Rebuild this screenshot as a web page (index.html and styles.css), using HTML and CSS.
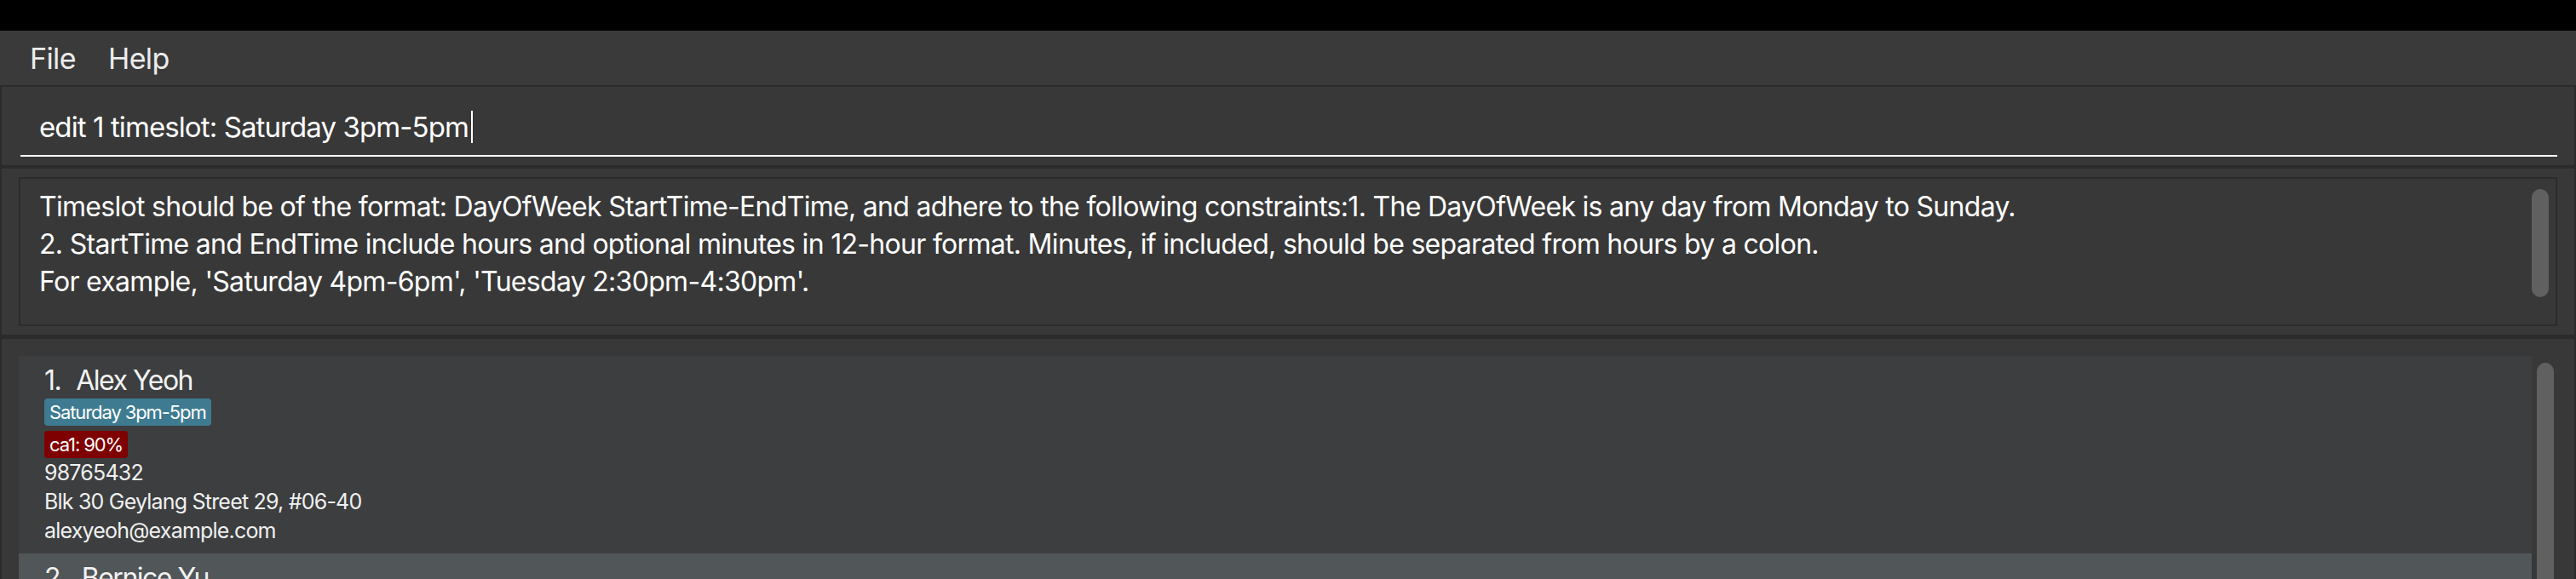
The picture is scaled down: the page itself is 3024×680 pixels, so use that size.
FILE: index.html
```html
<!DOCTYPE html>
<html lang="en">
<head>
<meta charset="utf-8">
<title>Address Book</title>
<link rel="stylesheet" href="styles.css">
</head>
<body>
<div class="titlebar"></div>
<nav class="menubar">
  <span class="menu-item">File</span>
  <span class="menu-item">Help</span>
</nav>
<main class="panels">
  <section class="command-panel">
    <div class="command-field">
      <span class="cmd-text">edit 1 timeslot: Saturday 3pm-5pm</span><span class="caret"></span>
    </div>
  </section>
  <section class="result-panel">
    <div class="result-box">
      <div class="result-text">
        <p>Timeslot should be of the format: DayOfWeek StartTime-EndTime, and adhere to the following constraints:1. The DayOfWeek is any day from Monday to Sunday.</p>
        <p>2. StartTime and EndTime include hours and optional minutes in 12-hour format. Minutes, if included, should be separated from hours by a colon.</p>
        <p>For example, 'Saturday 4pm-6pm', 'Tuesday 2:30pm-4:30pm'.</p>
      </div>
      <div class="scroll-track result-scroll"><div class="thumb"></div></div>
    </div>
  </section>
  <section class="list-panel">
    <div class="list">
      <article class="card even">
        <div class="name"><span class="index">1.</span>Alex Yeoh</div>
        <div class="tags"><span class="tag timeslot">Saturday 3pm-5pm</span></div>
        <div class="tags"><span class="tag grade">ca1: 90%</span></div>
        <div class="detail">98765432</div>
        <div class="detail">Blk 30 Geylang Street 29, #06-40</div>
        <div class="detail">alexyeoh@example.com</div>
      </article>
      <article class="card odd">
        <div class="name"><span class="index">2.</span>Bernice Yu</div>
      </article>
    </div>
    <div class="scroll-track list-scroll"><div class="thumb"></div></div>
  </section>
</main>
</body>
</html>
```
FILE: styles.css
```css
* { box-sizing: border-box; margin: 0; padding: 0; }
html, body { width: 3024px; height: 680px; overflow: hidden; background: #000; }
body { font-family: Inter, "Noto Sans", sans-serif; color: #fff; }

.titlebar { height: 36px; background: #000; }

.menubar {
  height: 64px;
  background: #3a3a3a;
  display: flex;
  align-items: center;
  padding-left: 35px;
  gap: 38px;
}
.menu-item { font-size: 34px; color: #ececec; letter-spacing: -0.6px; }

.panels {
  background: #2b2b2b;
  padding: 2px 2px 0 2px;
  display: flex;
  flex-direction: column;
  height: 580px;
  overflow: hidden;
}
.panels > section { flex-shrink: 0; }

.command-panel {
  height: 92px;
  background: #383838;
  padding: 0 20px 10px 22px;
  display: flex;
  flex-direction: column;
  justify-content: flex-end;
}
.command-field {
  border-bottom: 2px solid #fff;
  height: 80px;
  display: flex;
  align-items: center;
  padding-left: 22px;
  padding-top: 12px;
}
.cmd-text { font-size: 33px; letter-spacing: -0.9px; color: #fff; }
.caret { width: 2px; height: 38px; background: #fff; margin-left: 3px; }

.result-panel {
  margin-top: 4px;
  height: 195px;
  background: #383838;
  padding: 10px 20px;
}
.result-box {
  height: 100%;
  border: 2px solid #2b2b2b;
  display: flex;
  justify-content: space-between;
}
.result-text {
  padding: 11px 0 0 22px;
  font-size: 32px;
  line-height: 44px;
  letter-spacing: -0.7px;
  color: #fff;
}
.scroll-track { width: 20px; flex-shrink: 0; }
.result-scroll { margin: 12px 8px 0 0; }
.result-scroll .thumb { height: 127px; }
.thumb { background: #606060; border-radius: 10px; width: 20px; }

.list-panel {
  margin-top: 5px;
  flex: 1 0 auto;
  background: #383838;
  padding: 20px 0 0 20px;
  display: flex;
}
.list { width: 2950px; display: flex; flex-direction: column; }
.list-scroll { margin: 8px 0 0 6px; }
.list-scroll .thumb { height: 400px; }

.card { padding: 9px 0 0 30px; flex-shrink: 0; }
.card.even { background: #3c3e3f; height: 232px; }
.card.odd { background: #515658; height: 120px; }

.name { font-size: 32px; line-height: 40px; letter-spacing: -1.5px; color: #f2f2f2; }
.index { margin-right: 18px; }
.tags { display: flex; }
.tags + .tags { margin-top: 6px; }
.name + .tags { margin-top: 1px; }
.tag {
  font-size: 22px;
  line-height: 28px;
  padding: 2px 6px;
  border-radius: 4px;
  color: #fff;
  letter-spacing: -1.1px;
}
.tag.timeslot { background: #3e7b91; }
.tag.grade { background: #7f0000; }
.detail { font-size: 25px; line-height: 34px; color: #f0f0f0; letter-spacing: -0.8px; }
```
